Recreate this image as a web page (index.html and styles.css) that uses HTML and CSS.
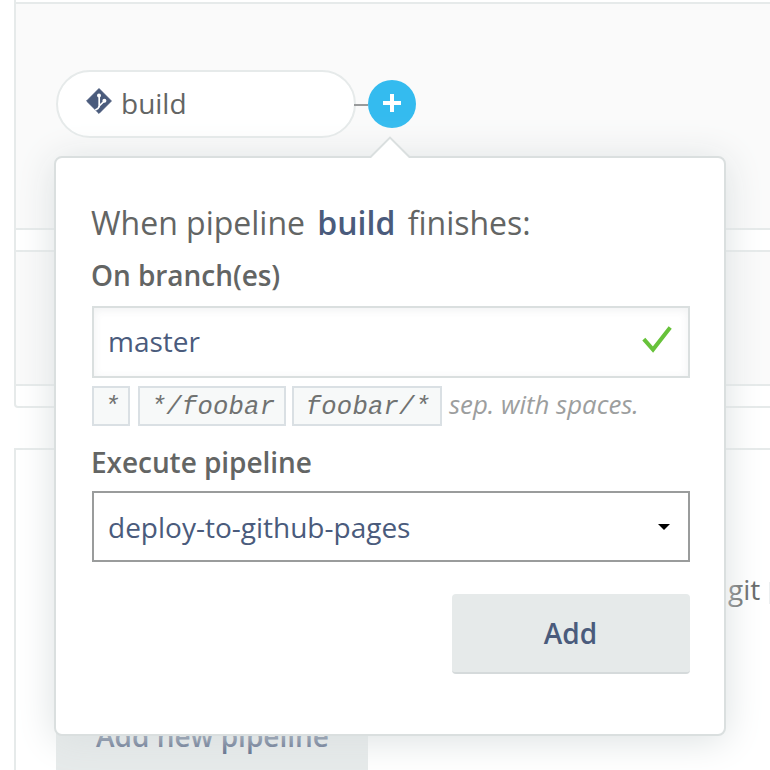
FILE: index.html
```html
<!DOCTYPE html>
<html lang="en">
<head>
<meta charset="utf-8">
<title>Pipelines</title>
<link rel="stylesheet" href="styles.css">
</head>
<body>
<main class="page">
  <section class="workflow">
    <div class="lane lane-main">
      <div class="node">
        <svg class="git" width="26" height="26" viewBox="0 0 26 26">
          <path d="M13 0.6 25.4 13 13 25.4 0.6 13Z" fill="#4a5b7c" stroke="#4a5b7c" stroke-width="1" stroke-linejoin="round"/>
          <path d="M13.2 7.5V19.5M18.4 13 13.2 18 12 20.5 9.3 22" fill="none" stroke="#fff" stroke-width="1.7"/>
          <circle cx="13" cy="7.5" r="2" fill="#fff"/><circle cx="18.4" cy="12.8" r="2" fill="#fff"/>
        </svg>
        <span>build</span>
      </div>
      <div class="link"></div>
      <div class="plus"><svg width="18" height="18" viewBox="0 0 18 18"><path d="M9 0V18M0 9H18" stroke="#fff" stroke-width="4"/></svg></div>
    </div>
    <div class="lane lane-second"></div>
  </section>
  <section class="details">
    <p class="note"><span>git</span><i class="code"></i></p>
    <button class="new">Add new pipeline</button>
  </section>
</main>
<form class="popup">
  <svg class="arrow" width="42" height="22" viewBox="0 0 42 22"><path d="M0 22 V21 H1 L21 1.4 L41 21 H42 V22Z" fill="#fff"/><path d="M0 21H1.6L21 1.6L40.4 21H42" fill="none" stroke="#dadfdf" stroke-width="2"/></svg>
  <h1>When pipeline <b>build</b> finishes:</h1>
  <label class="on">On branch(es)</label>
  <div class="field input"><span>master</span><svg width="30" height="28" viewBox="0 0 30 28"><path d="M1.8 13.2 11 23.6 28.2 1.6" fill="none" stroke="#67c23a" stroke-width="4"/></svg></div>
  <div class="hints"><code class="c1">*</code><code class="c2">*/foobar</code><code class="c3">foobar/*</code><em>sep. with spaces.</em></div>
  <label class="exec">Execute pipeline</label>
  <div class="field select"><span>deploy-to-github-pages</span><i class="caret"></i></div>
  <button class="add" type="button">Add</button>
</form>
</body>
</html>
```
FILE: styles.css
```css
* { box-sizing: border-box; }
body { margin: 0; background: #fff; font: 28px/38px "Open Sans", sans-serif; color: #636564; }
.page { width: 770px; height: 770px; overflow: hidden; padding-left: 14px; }
.workflow { width: 800px; height: 408px; border: 2px solid #e6eaea; border-top: 0; border-radius: 0 0 4px 4px; padding-top: 2px; }
.lane { background: #fafafa; border: solid #e6eaea; border-width: 2px 0; }
.lane-main { height: 228px; display: flex; align-items: flex-start; padding: 66px 0 0 40px; }
.lane-second { height: 136px; margin-top: 20px; }
.node { width: 300px; height: 68px; border: 2px solid #e6eaea; border-radius: 34px; background: #fff; display: flex; align-items: center; padding: 0 0 2px 28px; }
.git { margin: -4px 9px 0 0; flex: none; }
.link { width: 14px; height: 2px; margin: 34px 0 0 -2px; background: #999b9c; }
.plus { width: 48px; height: 48px; margin-top: 10px; border-radius: 50%; background: #34bbef; display: flex; align-items: center; justify-content: center; padding-bottom: 2px; }
.plus svg { display: block; }
.details { width: 800px; height: 400px; margin-top: 40px; border: 2px solid #e6eaea; padding: 120px 0 0 40px; }
.note { margin: 0; padding-left: 672px; display: flex; align-items: center; }
.code { width: 20px; height: 22px; margin: 8px 0 0 9px; border: 1px solid #eceff0; }
.new, .add { display: block; font: 600 28px/38px "Open Sans", sans-serif; color: #4a5b7c; background: #e6eaea; border: 0; padding: 0; }
.new { width: 312px; height: 80px; margin-top: 88px; padding-left: 1px; }
.popup { position: absolute; left: 54px; top: 156px; width: 672px; height: 580px; padding: 40px 34px 0 36px; background: #fff; border: 2px solid #dadfdf; border-radius: 8px; box-shadow: 0 4px 38px #dbe0e1; }
.arrow { position: absolute; left: 313px; top: -22px; }
h1 { margin: 0 0 0 -1px; padding-top: 1px; font-size: 32px; line-height: 48px; font-weight: 400; white-space: nowrap; }
h1 b { font-weight: 600; color: #4a5b7c; margin: 0 4px; }
label { display: block; font-weight: 600; margin-left: -1px; letter-spacing: -.05px; }
.on { margin-top: 9px; }
.field { display: flex; align-items: center; justify-content: space-between; color: #4a5b7c; padding-left: 14px; }
.input { height: 72px; margin-top: 12px; padding-bottom: 2px; border: 2px solid #dadfdf; padding-right: 16px; box-shadow: inset 0 2px 8px rgba(60, 80, 90, .08); }
.input svg { margin-top: -2px; }
.hints { display: flex; height: 40px; margin-top: 8px; white-space: nowrap; }
code { border: 2px solid #dae0e4; background: #f7f9f9; font: italic 25.6px/39px "Liberation Mono", monospace; letter-spacing: .2px; padding-left: 2px; color: #707271; text-align: center; }
.c1 { width: 38px; }
.c2 { width: 148px; margin-left: 8px; }
.c3 { width: 150px; margin-left: 6px; }
.hints em { font-size: 25.8px; line-height: 36px; color: #9c9e9e; margin-left: 7px; }
.exec { margin-top: 17px; }
.select { height: 71px; margin: 10px 0 0; border: 2px solid #9a9c9c; padding-right: 18px; padding-top: 1px; }
.caret { border: 6px solid transparent; border-top-color: #000; border-bottom: 0; }
.add { width: 238px; height: 80px; margin: 32px 0 0 auto; border-bottom: 2px solid #d5dadb; border-radius: 4px; padding-right: 1px; }
```
